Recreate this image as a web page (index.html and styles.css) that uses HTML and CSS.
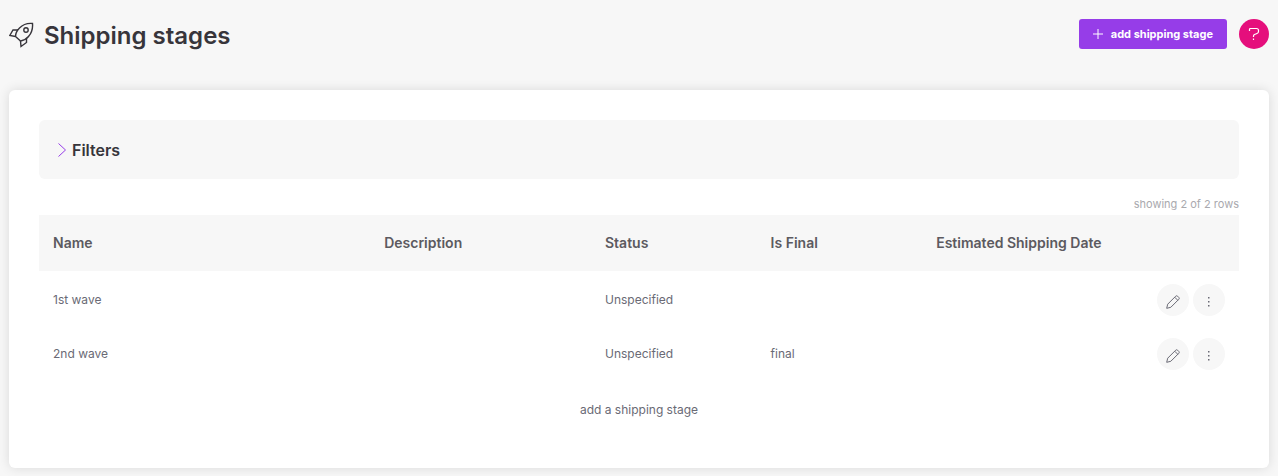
FILE: index.html
```html
<!DOCTYPE html>
<html lang="en">
<head>
    <meta charset="UTF-8">
    <meta name="viewport" content="width=device-width, initial-scale=1.0">
    <title>Shipping stages</title>
    <link rel="stylesheet" href="styles.css">
</head>
<body>
    <header class="page-header">
        <svg class="rocket" viewBox="0 0 26 26" aria-hidden="true">
            <path d="M23.500 1.500C18.500 1 14 2.500 10.500 6C8 8.500 6.500 11.500 6.500 14.500L11.500 19C14.500 18.500 17.500 17 19.500 14.500C22.500 11 24 7 23.500 1.500Z"/>
            <circle cx="17" cy="8" r="2.200"/>
            <path d="M9 8H4L.8 13.500L6.500 14.500M17.500 16.500V20.500L12 24.500L11.500 19"/>
        </svg>
        <h1>Shipping stages</h1>
        <button type="button" class="add-button">
            <svg viewBox="0 0 10 10" aria-hidden="true"><path d="M5 0V10M0 5H10"/></svg>
            add shipping stage
        </button>
        <button type="button" class="help-button" aria-label="Help">
            <svg viewBox="0 0 12 14" aria-hidden="true"><path d="M1.500 4V2.500Q1.500 1.500 2.500 1.500H8.500Q10.500 1.500 10.500 3.500V4.500Q10.500 6 9 6.500L6.500 7.500Q5.500 8 5.500 9V10M5.500 11.500V13"/></svg>
        </button>
    </header>

    <main class="card">
        <button type="button" class="filters" aria-expanded="false">
            <svg viewBox="0 0 8 14" aria-hidden="true"><path d="M.5 .5L7.500 7L.5 13.500"/></svg>
            Filters
        </button>

        <p class="row-count">showing 2 of 2 rows</p>

        <table class="stages">
            <thead>
                <tr>
                    <th class="col-name">Name</th>
                    <th class="col-description">Description</th>
                    <th class="col-status">Status</th>
                    <th class="col-final">Is Final</th>
                    <th class="col-date">Estimated Shipping Date</th>
                    <th></th>
                </tr>
            </thead>
            <tbody>
                <tr>
                    <td>1st wave</td>
                    <td></td>
                    <td>Unspecified</td>
                    <td></td>
                    <td></td>
                    <td>
                        <div class="actions">
                            <button type="button" class="icon-button" aria-label="Edit">
                                <svg viewBox="0 0 14 14" aria-hidden="true"><path d="M.7 13.300L1.700 9.200L9.700 1.200Q10.600 .3 11.600 1.200L12.800 2.400Q13.700 3.400 12.800 4.300L4.800 12.300ZM8.700 2.200L11.800 5.300"/></svg>
                            </button>
                            <button type="button" class="icon-button" aria-label="More">
                                <svg class="dots" viewBox="0 0 14 14" aria-hidden="true"><path d="M6 2h1.500v1.500H6zM6 6h1.500v1.500H6zM6 10h1.500v1.500H6z"/></svg>
                            </button>
                        </div>
                    </td>
                </tr>
                <tr>
                    <td>2nd wave</td>
                    <td></td>
                    <td>Unspecified</td>
                    <td>final</td>
                    <td></td>
                    <td>
                        <div class="actions">
                            <button type="button" class="icon-button" aria-label="Edit">
                                <svg viewBox="0 0 14 14" aria-hidden="true"><path d="M.7 13.300L1.700 9.200L9.700 1.200Q10.600 .3 11.600 1.200L12.800 2.400Q13.700 3.400 12.800 4.300L4.800 12.300ZM8.700 2.200L11.800 5.300"/></svg>
                            </button>
                            <button type="button" class="icon-button" aria-label="More">
                                <svg class="dots" viewBox="0 0 14 14" aria-hidden="true"><path d="M6 2h1.500v1.500H6zM6 6h1.500v1.500H6zM6 10h1.500v1.500H6z"/></svg>
                            </button>
                        </div>
                    </td>
                </tr>
            </tbody>
        </table>

        <a href="#" class="add-link">add a shipping stage</a>
    </main>
</body>
</html>
```

FILE: styles.css
```css
* {
    box-sizing: border-box;
}

body {
    margin: 0;
    padding: 19px 9px 8px;
    background-color: #f7f7f7;
    color: #6a6a75;
    font-family: Inter, sans-serif;
    font-size: 12px;
    line-height: 18px;
}

button {
    border: none;
    font-family: inherit;
    cursor: pointer;
}

svg {
    fill: none;
    stroke: currentColor;
}

.page-header {
    display: flex;
    align-items: flex-start;
    margin-bottom: 38px;
    color: #37353b;
}

.page-header h1 {
    flex: 1;
    margin: 0 0 0 9px;
    font-size: 24px;
    line-height: 33px;
    font-weight: 600;
}

.rocket {
    width: 26px;
    height: 26px;
    margin-top: 3px;
    stroke-width: 1.4;
}

.add-button {
    display: flex;
    align-items: center;
    gap: 8px;
    height: 30px;
    padding: 0 14px;
    border-radius: 3px;
    background-color: #963de8;
    color: #fff;
    font-size: 11px;
    font-weight: 700;
}

.add-button svg {
    width: 10px;
    height: 10px;
}

.help-button {
    display: flex;
    align-items: center;
    justify-content: center;
    width: 30px;
    height: 30px;
    margin-left: 12px;
    padding: 0;
    border-radius: 50%;
    background-color: #e50f7c;
    color: #fff;
}

.help-button svg {
    width: 12px;
    height: 14px;
    stroke-width: 1.2;
}

.card {
    padding: 30px 30px 49px;
    border-radius: 6px;
    background-color: #fff;
    box-shadow: 0 0 12px rgba(0, 0, 0, 0.12);
}

.filters {
    display: flex;
    align-items: center;
    gap: 6px;
    width: 100%;
    height: 59px;
    padding: 0 19px;
    border-radius: 6px;
    background-color: #f7f7f7;
    color: #37353b;
    font-size: 16px;
    font-weight: 600;
}

.filters svg {
    width: 8px;
    height: 14px;
    color: #963de8;
}

.row-count {
    margin: 16px 0 2px;
    color: #a9a9ae;
    font-size: 11px;
    text-align: right;
}

.stages {
    width: 100%;
    border-collapse: collapse;
    table-layout: fixed;
}

.stages th {
    height: 56px;
    padding: 0 14px;
    background-color: #f7f7f7;
    color: #5c5a60;
    font-size: 14px;
    font-weight: 600;
    text-align: left;
}

.stages td {
    height: 54px;
    padding: 0 14px;
}

.stages tbody::before {
    content: "";
    display: block;
    height: 2px;
}

.col-name {
    width: 27.600%;
}

.col-description {
    width: 18.400%;
}

.col-status {
    width: 13.800%;
}

.col-final {
    width: 13.800%;
}

.col-date {
    width: 17.600%;
}

.actions {
    display: flex;
    justify-content: flex-end;
    gap: 4px;
}

.icon-button {
    display: flex;
    align-items: center;
    justify-content: center;
    width: 32px;
    height: 32px;
    padding: 4px 0 0;
    border-radius: 50%;
    background-color: #f7f7f7;
    color: #6a6a75;
}

.icon-button svg {
    width: 14px;
    height: 14px;
}

.icon-button .dots {
    fill: currentColor;
    stroke: none;
}

.add-link {
    display: block;
    width: fit-content;
    margin: 20px auto 0;
    color: #6a6a75;
    text-decoration: none;
}
```
